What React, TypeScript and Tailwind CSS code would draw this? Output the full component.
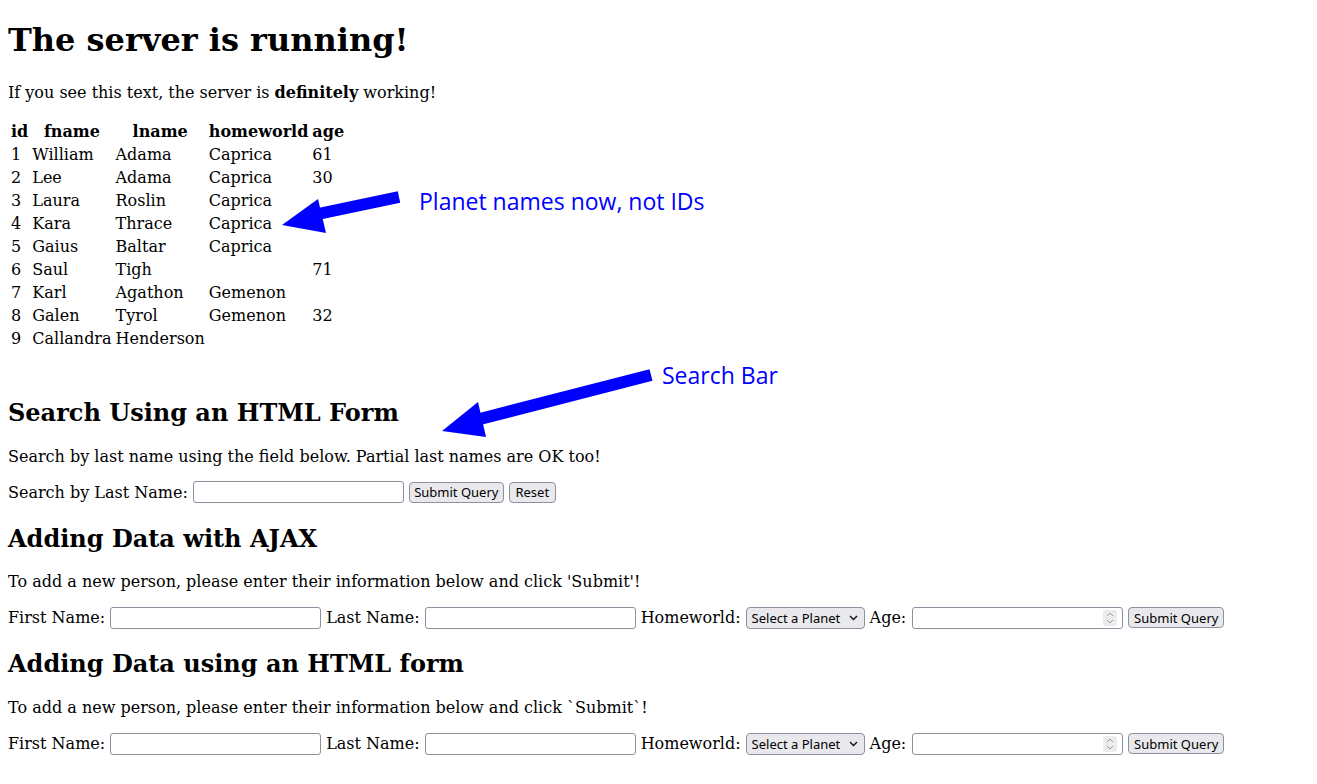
import React from "react";

const rows: [number, string, string, string, string][] = [
  [1, "William", "Adama", "Caprica", "61"],
  [2, "Lee", "Adama", "Caprica", "30"],
  [3, "Laura", "Roslin", "Caprica", ""],
  [4, "Kara", "Thrace", "Caprica", ""],
  [5, "Gaius", "Baltar", "Caprica", ""],
  [6, "Saul", "Tigh", "", "71"],
  [7, "Karl", "Agathon", "Gemenon", ""],
  [8, "Galen", "Tyrol", "Gemenon", "32"],
  [9, "Callandra", "Henderson", "", ""],
];

function TextInput({ w = "w-[211px]" }: { w?: string }) {
  return (
    <span
      className={`inline-block ${w} h-[22px] border border-[#8f8f9d] rounded-[3px] bg-white shrink-0`}
    />
  );
}

function NumberInput() {
  return (
    <span className="relative inline-flex ml-px w-[211px] h-[22px] border border-[#8f8f9d] rounded-[3px] bg-white shrink-0 justify-end items-center pr-[5px]">
      <span className="flex flex-col items-center justify-center w-[14px] h-[16px] bg-[#ececef] rounded-[2px]">
        <svg width="8" height="14" viewBox="0 0 8 14" fill="none" stroke="#9a9aa3" strokeWidth="1">
          <path d="M1 5 L4 2 L7 5" />
          <path d="M1 9 L4 12 L7 9" />
        </svg>
      </span>
    </span>
  );
}

function Button({ label, w }: { label: string; w: string }) {
  return (
    <span
      className={`inline-flex ${w} h-[21px] items-center justify-center border border-[#8f8f9d] rounded-[4px] bg-[#e9e9ed] text-[13px] font-['Noto_Sans',sans-serif] text-black shrink-0`}
    >
      {label}
    </span>
  );
}

function Select() {
  return (
    <span className="inline-flex w-[119px] h-[22px] items-center justify-between pl-[5px] pr-[6px] border border-[#8f8f9d] rounded-[4px] bg-[#e9e9ed] text-[13px] font-['Noto_Sans',sans-serif] text-black shrink-0">
      <span>Select a Planet</span>
      <svg width="9" height="6" viewBox="0 0 9 6" fill="none" stroke="#111" strokeWidth="1.4">
        <path d="M1 1 L4.5 4.5 L8 1" />
      </svg>
    </span>
  );
}

function AddRow() {
  return (
    <div className="flex items-center gap-[5px] h-[22px] whitespace-nowrap">
      <span>First Name:</span>
      <TextInput />
      <span>Last Name:</span>
      <TextInput />
      <span>Homeworld:</span>
      <Select />
      <span>Age:</span>
      <NumberInput />
      <Button label="Submit Query" w="w-[96px]" />
    </div>
  );
}

export default function App() {
  return (
    <div className="relative flow-root bg-white text-black px-2 pb-2 font-['DejaVu_Serif',serif] text-[16px] leading-[normal] min-h-[784px]">
      <h1 className="text-[32px] font-bold mt-[21.44px] mb-[23.5px]">The server is running!</h1>
      <p className="mt-4 mb-[17px]">
        If you see this text, the server is <b className="font-bold">definitely</b> working!
      </p>
      <table className="border-separate border-spacing-[2px] mb-[47px]">
        <thead>
          <tr>
            <th className="p-px font-bold text-center">id</th>
            <th className="p-px font-bold text-center">fname</th>
            <th className="p-px font-bold text-center">lname</th>
            <th className="p-px font-bold text-center">homeworld</th>
            <th className="p-px font-bold text-center">age</th>
          </tr>
        </thead>
        <tbody>
          {rows.map((r) => (
            <tr key={r[0]}>
              <td className="p-px">{r[0]}</td>
              <td className="p-px">{r[1]}</td>
              <td className="p-px">{r[2]}</td>
              <td className="p-px">{r[3]}</td>
              <td className="p-px">{r[4]}</td>
            </tr>
          ))}
        </tbody>
      </table>

      <h2 className="text-[24px] font-bold my-[19.92px]">Search Using an HTML Form</h2>
      <p className="mt-4 mb-[15px]">Search by last name using the field below. Partial last names are OK too!</p>
      <div className="flex items-center gap-[5px] h-[23px] whitespace-nowrap">
        <span>Search by Last Name:</span>
        <TextInput />
        <Button label="Submit Query" w="w-[95px]" />
        <Button label="Reset" w="w-[47px]" />
      </div>

      <h2 className="text-[24px] font-bold mt-[19.92px] mb-[19px]">Adding Data with AJAX</h2>
      <p className="my-4">To add a new person, please enter their information below and click 'Submit'!</p>
      <AddRow />

      <h2 className="text-[24px] font-bold my-[19.92px]">Adding Data using an HTML form</h2>
      <p className="my-4">To add a new person, please enter their information below and click `Submit`!</p>
      <AddRow />

      {/* annotations */}
      <svg className="absolute left-0 top-0 pointer-events-none" width="1317" height="784">
        <line x1="399" y1="197" x2="318" y2="214" stroke="#0000ff" strokeWidth="12" />
        <polygon points="282,225 318,199 326,233" fill="#0000ff" />
        <line x1="651" y1="375" x2="480" y2="419" stroke="#0000ff" strokeWidth="12" />
        <polygon points="442,431 478,402 486,437" fill="#0000ff" />
      </svg>
      <div className="absolute left-[419px] top-[186px] text-[23px] leading-[30px] text-[#0000ff] font-['Open_Sans',sans-serif] whitespace-nowrap">
        Planet names now, not IDs
      </div>
      <div className="absolute left-[662px] top-[360px] text-[23px] leading-[30px] text-[#0000ff] font-['Open_Sans',sans-serif] whitespace-nowrap">
        Search Bar
      </div>
    </div>
  );
}
